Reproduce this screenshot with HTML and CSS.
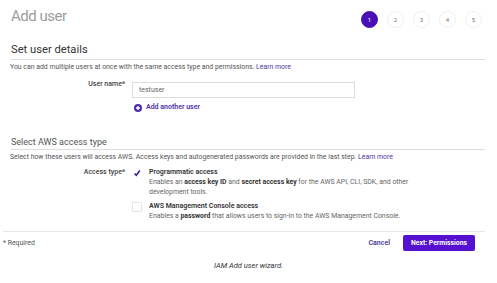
FILE: index.html
```html
<!DOCTYPE html>
<html>
<head>
    <title>Add user</title>
<link rel="stylesheet" href="styles.css">
</head>
<body>
    <div class="wizard">
        <div class="header">
            <h1>Add user</h1>
            <div class="steps">
                <span class="step active">1</span>
                <span class="step">2</span>
                <span class="step">3</span>
                <span class="step">4</span>
                <span class="step">5</span>
            </div>
        </div>

        <h2>Set user details</h2>
        <p class="info">You can add multiple users at once with the same access type and permissions. <a href="#">Learn more</a></p>

        <div class="row name-row">
            <label class="label">User name*</label>
            <div class="field">
                <input class="text-input" type="text" value="testuser">
                <a href="#" class="add-link">
                    <svg width="8" height="8" viewBox="0 0 8 8"><circle cx="4" cy="4" r="4" fill="#4d2fa8"/><path d="M4 2v4M2 4h4" stroke="#fff" stroke-width="1.3"/></svg>
                    Add another user
                </a>
            </div>
        </div>

        <h2 class="second">Select AWS access type</h2>
        <p class="info">Select how these users will access AWS. Access keys and autogenerated passwords are provided in the last step. <a href="#">Learn more</a></p>

        <div class="row access-row">
            <label class="label">Access type*</label>
            <div class="field">
                <div class="option">
                    <span class="check checked">
                        <svg width="8" height="8" viewBox="0 0 8 8"><path d="M1.5 4.5l1.8 1.8L6.8 1.5" stroke="#3c1fa0" stroke-width="1.6" fill="none"/></svg>
                    </span>
                    <div>
                        <div class="opt-title">Programmatic access</div>
                        <div class="opt-desc">Enables an <b>access key ID</b> and <b>secret access key</b> for the AWS API, CLI, SDK, and other development tools.</div>
                    </div>
                </div>
                <div class="option">
                    <span class="check"></span>
                    <div>
                        <div class="opt-title">AWS Management Console access</div>
                        <div class="opt-desc">Enables a <b>password</b> that allows users to sign-in to the AWS Management Console.</div>
                    </div>
                </div>
            </div>
        </div>

        <div class="footer">
            <span class="required">* Required</span>
            <div class="actions">
                <a href="#" class="cancel">Cancel</a>
                <button class="next">Next: Permissions</button>
            </div>
        </div>
    </div>
    <p class="caption">IAM Add user wizard.</p>
</body>
</html>
```

FILE: styles.css
```css
body {
  margin: 0;
  font-family: Roboto, "Liberation Sans", sans-serif;
  color: #333;
  background: #fff;
}

.wizard {
  padding: 0 12px 0 11px;
}

.header {
  display: flex;
  justify-content: space-between;
  align-items: center;
  height: 38px;
}

h1 {
  margin: 0;
  align-self: flex-start;
  padding-top: 7px;
  font-size: 15px;
  line-height: 18px;
  font-weight: 400;
  letter-spacing: -0.5px;
  color: #9d9d9d;
}

.steps {
  display: flex;
  gap: 9px;
  margin-right: 3px;
}

.step {
  width: 17px;
  height: 17px;
  border-radius: 50%;
  border: 1px solid #f0f0f0;
  box-sizing: border-box;
  display: flex;
  align-items: center;
  justify-content: center;
  font-size: 6px;
  color: #777;
}

.step.active {
  background: #4a0fb5;
  border-color: #4a0fb5;
  color: #fff;
}

h2 {
  margin: 5px 0 0;
  padding-bottom: 2px;
  font-size: 11.2px;
  line-height: 14px;
  font-weight: 400;
  color: #333;
  border-bottom: 1px solid #ddd;
}

h2.second {
  margin-top: 24px;
  padding-bottom: 1px;
  font-size: 9px;
  line-height: 12px;
  color: #555;
}

.info {
  margin: 3px 0 0 -1px;
  font-size: 6.9px;
  line-height: 9px;
  color: #555;
}

a {
  color: #4d3aa3;
  text-decoration: none;
}

.row {
  display: flex;
  gap: 7px;
}

.label {
  width: 114px;
  text-align: right;
  font-size: 7px;
  font-weight: 500;
  color: #444;
}

.name-row {
  margin-top: 5px;
}

.name-row .label {
  padding-top: 3px;
}

.text-input {
  width: 223px;
  height: 16px;
  box-sizing: border-box;
  border: 1px solid #ddd;
  padding: 0 6px;
  font-family: inherit;
  font-size: 7px;
  color: #666;
  outline: none;
}

.add-link {
  display: flex;
  align-items: center;
  gap: 4px;
  margin: 5px 0 0 2px;
  font-size: 7px;
  line-height: 9px;
  font-weight: 600;
  color: #4d2fa8;
}

.access-row {
  margin-top: 5px;
}

.access-row .label {
  line-height: 10px;
}

.field {
  flex: 1;
}

.option {
  display: flex;
  gap: 7px;
  margin-bottom: 4px;
}

.check {
  width: 8px;
  height: 8px;
  margin-top: 1px;
  border: 1px solid #e4e4e4;
  border-radius: 1px;
  flex: none;
  display: flex;
  align-items: center;
  justify-content: center;
}

.check.checked {
  border-color: transparent;
}

.opt-title {
  font-size: 7px;
  line-height: 10px;
  font-weight: 600;
  color: #333;
}

.opt-desc {
  max-width: 268px;
  font-size: 6.9px;
  line-height: 10px;
  color: #666;
}

.opt-desc b {
  color: #333;
}

.footer {
  display: flex;
  justify-content: space-between;
  align-items: center;
  margin: 6px 0 0 -8px;
  padding-top: 3px;
  border-top: 1px solid #e6e6e6;
}

.required {
  font-size: 6.9px;
  color: #555;
}

.actions {
  display: flex;
  align-items: center;
  gap: 13px;
  margin-right: 10px;
}

.cancel {
  font-size: 7px;
  font-weight: 600;
  color: #4b3a9a;
}

.next {
  width: 72px;
  height: 16px;
  border: none;
  border-radius: 2px;
  background: #5611d0;
  color: #fff;
  font-family: inherit;
  font-size: 6.8px;
  font-weight: 700;
  cursor: pointer;
}

.caption {
  margin: 10px 0 0;
  text-align: center;
  font-size: 7.5px;
  line-height: 9px;
  font-style: italic;
  color: #333;
}
```
